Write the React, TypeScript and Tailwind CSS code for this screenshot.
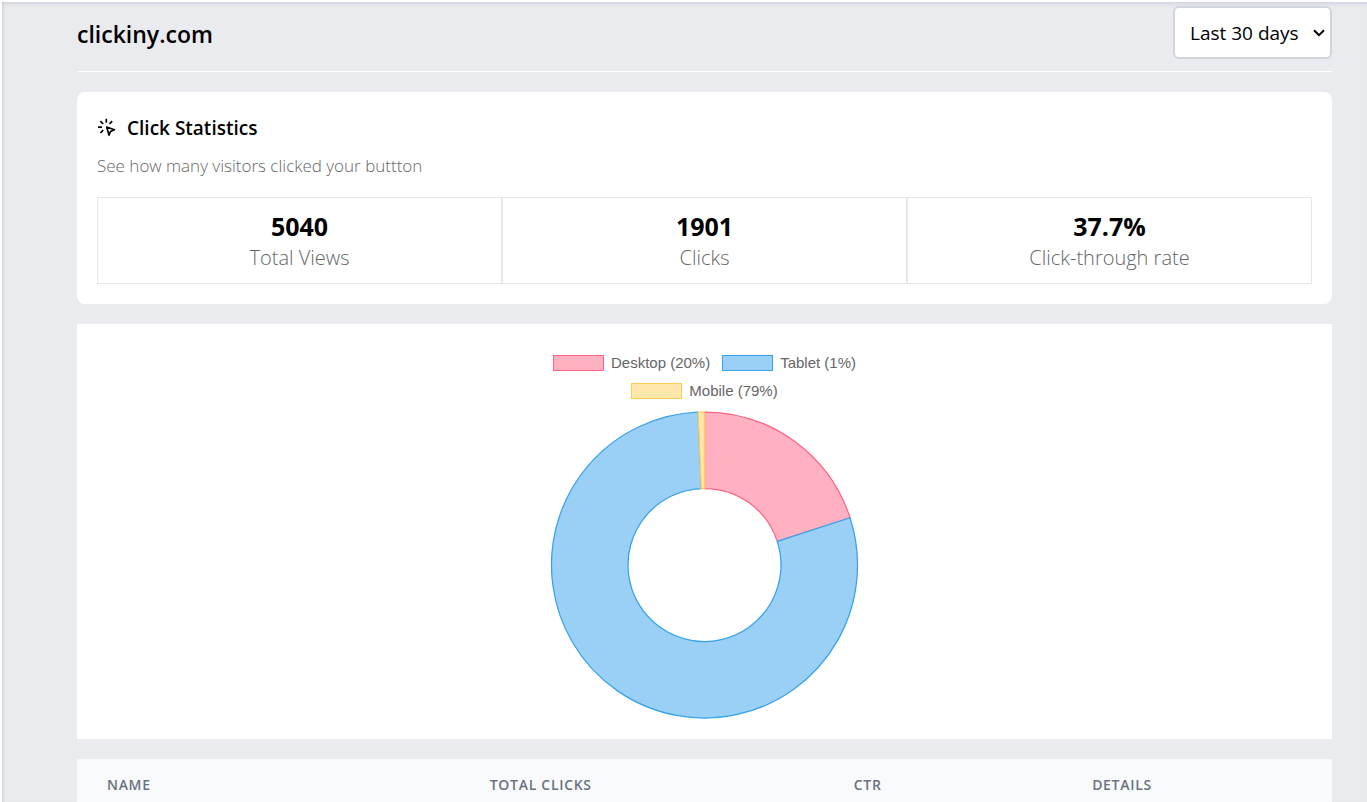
import React, { useState } from 'react';

const stats = [
    { label: 'Total Views', value: '5040' },
    { label: 'Clicks', value: '1901' },
    { label: 'Click-through rate', value: '37.7%' },
];

const legend = [
    { label: 'Desktop (20%)', swatch: 'bg-[#ffb1c1] border-[#ff6384]' },
    { label: 'Tablet (1%)', swatch: 'bg-[#9ad0f5] border-[#36a2eb]' },
    { label: 'Mobile (79%)', swatch: 'bg-[#ffe6aa] border-[#ffcd56]' },
];

const slices = [
    { from: 0, to: 72, fill: '#ffb1c1', stroke: '#ff6384' },
    { from: 72, to: 357.6, fill: '#9ad0f5', stroke: '#36a2eb' },
    { from: 357.6, to: 360, fill: '#ffe6aa', stroke: '#ffcd56' },
];

const columns = [
    { label: 'Name', width: 'w-[30.5%]' },
    { label: 'Total Clicks', width: 'w-[29%]' },
    { label: 'CTR', width: 'w-[19%]' },
    { label: 'Details', width: 'w-[21.5%]' },
];

const OUTER = 153;
const INNER = 76.5;

function point(radius: number, angle: number) {
    const rad = ((angle - 90) * Math.PI) / 180;
    return `${153.5 + radius * Math.cos(rad)} ${154 + radius * Math.sin(rad)}`;
}

function slicePath(from: number, to: number) {
    const large = to - from > 180 ? 1 : 0;
    return [
        `M ${point(OUTER, from)}`,
        `A ${OUTER} ${OUTER} 0 ${large} 1 ${point(OUTER, to)}`,
        `L ${point(INNER, to)}`,
        `A ${INNER} ${INNER} 0 ${large} 0 ${point(INNER, from)}`,
        'Z',
    ].join(' ');
}

function ClickIcon() {
    return (
        <svg viewBox="0 0 20 20" className="w-5 h-5" fill="none" stroke="currentColor" strokeWidth="1.7" aria-hidden="true">
            <path d="M9.3 .8v3.9M3.4 3.2l2.8 2.8M15.2 3.2l-2.8 2.8M1 9.2h4M6.2 12.2l-2.8 2.8" />
            <path d="M9.7 9l7.7 2.8-3.9 1.7-1.5 3.8z" strokeLinejoin="round" />
        </svg>
    );
}

function DoughnutChart() {
    return (
        <div className="flex flex-col items-center bg-white pt-[29px] pb-5">
            <ul className="flex flex-wrap justify-center gap-x-3 gap-y-2 w-[308px] font-['Liberation_Sans',Arial,sans-serif] text-[15px] leading-5 text-[#666]">
                {legend.map((item) => (
                    <li key={item.label} className="flex items-center gap-[7px]">
                        <span className={`w-[51px] h-4 border ${item.swatch}`} />
                        {item.label}
                    </li>
                ))}
            </ul>
            <svg viewBox="0 0 308 308" className="mt-[10px] w-[308px] h-[308px]" role="img" aria-label="Clicks by device">
                {slices.map((slice) => (
                    <path key={slice.from} d={slicePath(slice.from, slice.to)} fill={slice.fill} stroke={slice.stroke} strokeWidth="1.25" strokeLinejoin="round" />
                ))}
            </svg>
        </div>
    );
}

export default function App() {
    const [range, setRange] = useState('30');

    return (
        <div className="h-screen overflow-hidden bg-white pt-[2px] pl-[2px] font-['Open_Sans','Segoe_UI',sans-serif] text-black">
            <main className="h-full bg-[#eaebef] pl-[75px] pr-[35px] pt-1 shadow-[inset_0_5px_5px_-4px_rgba(0,0,50,0.14),inset_3px_0_3px_-2px_rgba(0,0,50,0.12)]">
                <header className="flex items-start justify-between border-b border-white pb-3">
                    <h1 className="pt-[10px] text-[23px] leading-9 font-semibold">clickiny.com</h1>
                    <div className="relative">
                        <select
                            aria-label="Date range"
                            value={range}
                            onChange={(e) => setRange(e.target.value)}
                            className="appearance-none h-[53px] w-[159px] rounded-md border-2 border-gray-300 bg-white pl-[15px] pr-7 pt-[2px] text-[19px]"
                        >
                            <option value="7">Last 7 days</option>
                            <option value="30">Last 30 days</option>
                            <option value="90">Last 90 days</option>
                        </select>
                        <svg viewBox="0 0 12 8" className="pointer-events-none absolute right-[7px] top-[23px] w-3 h-2" fill="none" stroke="currentColor" strokeWidth="2" aria-hidden="true">
                            <path d="M1 1.2l5 5 5-5" />
                        </svg>
                    </div>
                </header>

                <section className="mt-5 rounded-lg bg-white p-5">
                    <h2 className="flex items-center gap-[10px] text-[19px] leading-8 font-semibold">
                        <ClickIcon />
                        Click Statistics
                    </h2>
                    <p className="mt-2 text-[17px] leading-7 font-light text-[#666]">See how many visitors clicked your buttton</p>
                    <dl className="mt-[17px] grid grid-cols-3">
                        {stats.map((stat) => (
                            <div key={stat.label} className="flex flex-col-reverse items-center border border-gray-200 pt-[10px] pb-[11px]">
                                <dt className="text-xl leading-7 font-light text-[#666]">{stat.label}</dt>
                                <dd className="text-[25px] leading-9 font-bold">{stat.value}</dd>
                            </div>
                        ))}
                    </dl>
                </section>

                <section className="mt-5">
                    <DoughnutChart />
                </section>

                <table className="mt-5 w-full table-fixed bg-gray-50 text-left">
                    <thead>
                        <tr>
                            {columns.map((col) => (
                                <th key={col.label} scope="col" className={`${col.width} px-[30px] py-4 text-sm font-semibold uppercase tracking-wider text-gray-500`}>
                                    {col.label}
                                </th>
                            ))}
                        </tr>
                    </thead>
                </table>
            </main>
        </div>
    );
}
